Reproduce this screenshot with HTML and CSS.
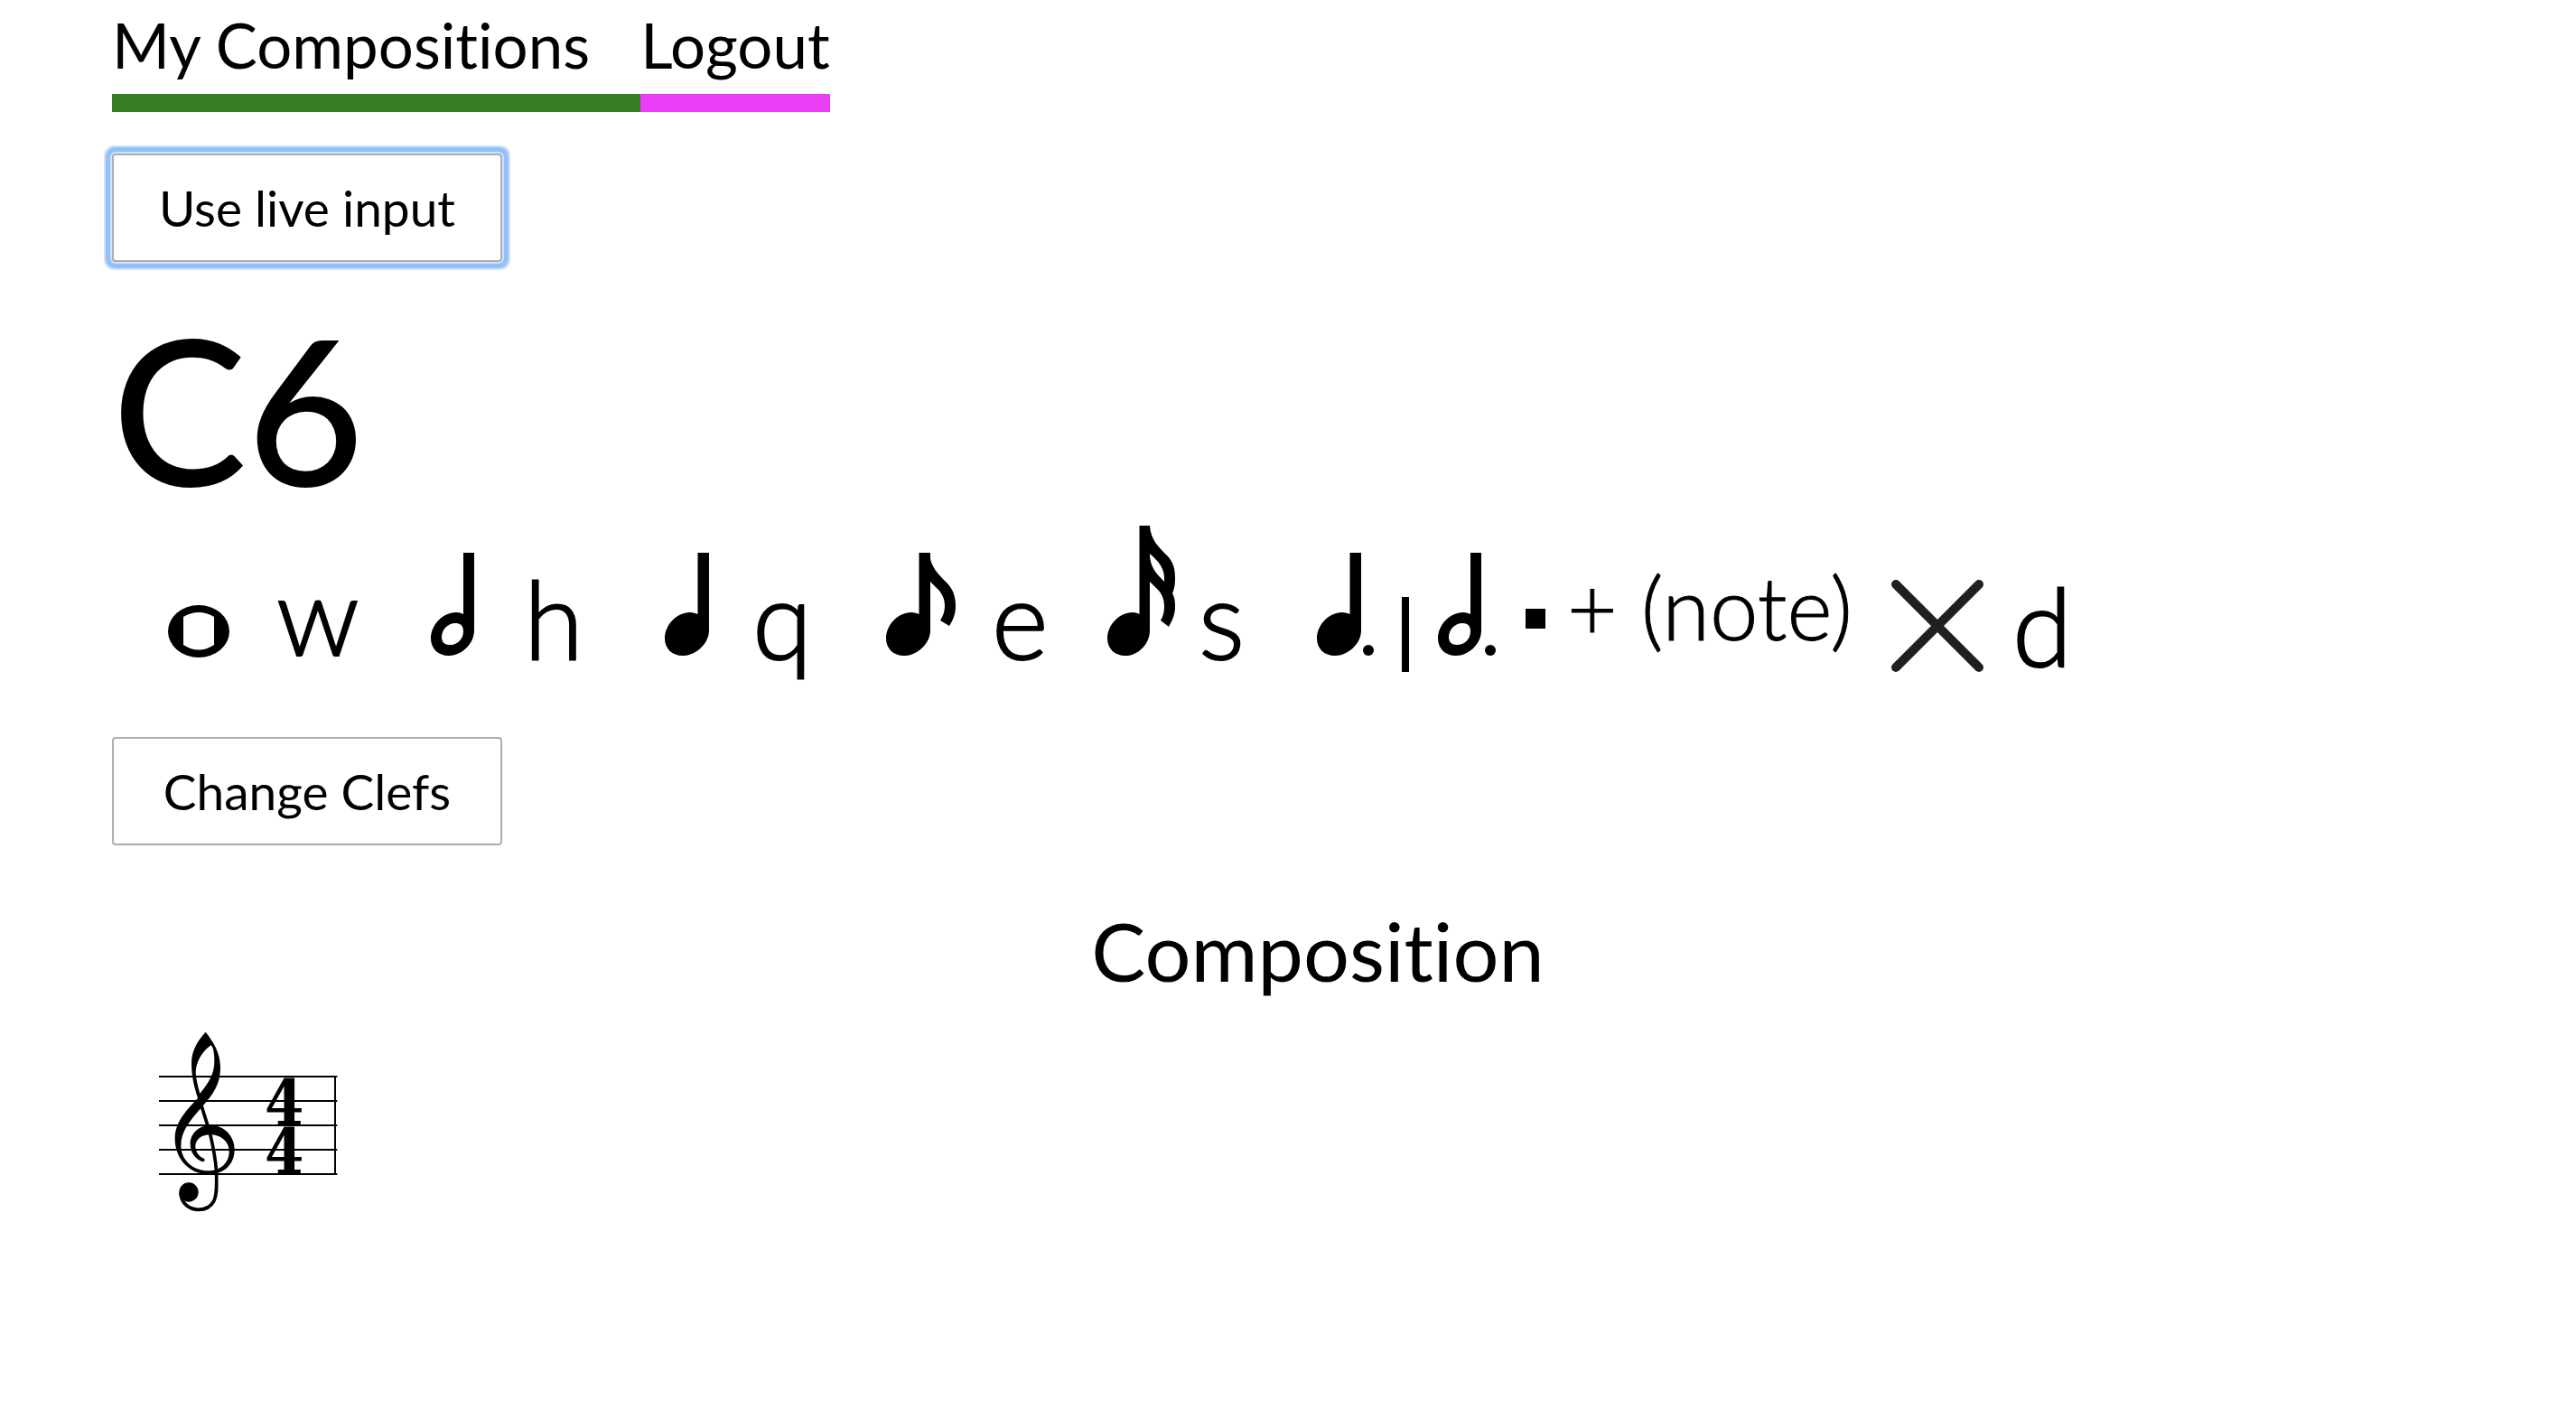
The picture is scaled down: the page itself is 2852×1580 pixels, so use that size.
FILE: index.html
```html
<!DOCTYPE html>
<html lang="en">
<head>
<meta charset="utf-8">
<meta name="viewport" content="width=device-width, initial-scale=1">
<title>Composition</title>
<link rel="stylesheet" href="styles.css">
</head>
<body>
<svg class="sprite" aria-hidden="true">
  <defs>
    <path id="quarter" d="M36.500 30H49V116C49 131 34 144 20 144C8 144 0 136 0 125C0 110 13 96 28 96C31 96 34 97 36.500 98Z"/>
    <path id="half" fill-rule="evenodd" d="M36 30H48V116C48 131 34 144 20 144C8 144 0 136 0 125C0 110 13 96 28 96C31 96 34 97 36 98ZM27 108C33 108 36 111 36 117C36 126 29 132 21 132C15 132 12 128.500 12 123.500C12 115 19 108 27 108Z"/>
  </defs>
</svg>
<nav class="nav" aria-label="Main">
  <a class="nav-link nav-compositions" href="#compositions">My Compositions</a>
  <a class="nav-link nav-logout" href="#logout">Logout</a>
</nav>
<main class="main">
  <button class="button button-active" type="button">Use live input</button>
  <p class="pitch">C6</p>
  <div class="legend">
    <svg class="icon" width="144" height="146" viewBox="162 0 144 146" role="img" aria-label="Whole note"><path fill-rule="evenodd" d="M186 117a34 29 0 1 0 68 0a34 29 0 1 0-68 0ZM203 101Q220 91 237 101V132Q220 143 203 132Z"/></svg>
    <span class="key key-w">w</span>
    <svg class="icon" width="194" height="146" viewBox="386 0 194 146" role="img" aria-label="Half note"><use href="#half" x="477"/></svg>
    <span class="key">h</span>
    <svg class="icon" width="173" height="146" viewBox="660 0 173 146" role="img" aria-label="Quarter note"><use href="#quarter" x="736"/></svg>
    <span class="key">q</span>
    <svg class="icon" width="185" height="146" viewBox="913 0 185 146" role="img" aria-label="Eighth note"><use href="#quarter" x="981"/><path transform="translate(981 0)" d="M47 30H48C49 46 58 54 67 63C75 71 77 80 77 89C77 98 74 105 70 111L60 105C63 100 65 95 65 89C65 80 61 74 57 70L47 60Z"/></svg>
    <span class="key">e</span>
    <svg class="icon" width="149" height="146" viewBox="1178 0 149 146" role="img" aria-label="Sixteenth note"><path transform="translate(1226 0)" fill-rule="evenodd" d="M35.500 0H47C48 16 57 24 66 33C74 41 75 50 75 58C75 66 74 70 72 75C75 80 75 86 75 90C75 98 72 105 68 112L59 105C62 100 63 95 63 89C63 80 59 74 56 71L47 62V116C47 131 34 144 20 144C8 144 0 136 0 125C0 110 13 96 28 96C31 96 34 97 35.500 98ZM47 31C47 45 53 52 63 62V58C63 47 57 40 47 31Z"/></svg>
    <span class="key">s</span>
    <svg class="icon" width="282" height="162" viewBox="1407 0 282 162" role="img" aria-label="Dotted quarter note or dotted half note"><use href="#quarter" x="1458"/><circle cx="1515" cy="138" r="6"/><path d="M1552 79h8v83h-8z"/><use href="#half" x="1592"/><circle cx="1650" cy="138" r="6"/></svg>
    <span class="period" role="img" aria-label="period"></span>
    <span class="phrase">+ (note)</span>
    <svg class="cross" width="102" height="102" viewBox="0 0 102 102" role="img" aria-label="Delete"><path d="M5 5L97 97M97 5L5 97"/></svg>
    <span class="key key-delete">d</span>
  </div>
  <button class="button" type="button">Change Clefs</button>
  <h1 class="title">Composition</h1>
  <svg class="staff" width="198" height="200" viewBox="48 66 594 600" role="img" aria-label="Treble clef, four four time">
    <path class="staff-lines" d="M48 216H640M48 297H640M48 378H640M48 459H640M48 540H640M633 216V540"/>
    <path fill-rule="evenodd" d="M203 68C232 105 252 140 252 187C252 240 228 275 197 310L188 320C150 362 121 400 121 445C121 492 160 529 212 529C250 529 281 505 281 465C281 433 255 409 218 409C190 409 169 425 169 448C169 466 181 482 197 488A6 6 0 0 1 193 499C168 490 152 468 152 440C152 403 182 378 220 378C265 378 299 413 299 460C299 508 263 541 213 541C150 541 101 490 101 422C101 370 135 332 177 288C165 250 156 215 156 172C156 128 178 95 203 68ZM221 112C194 130 170 165 170 205C172 230 178 250 184 272C215 235 232 205 232 165C232 140 229 120 221 112Z"/>
    <path class="clef-tail" d="M190 315C200 350 213 385 220 415C230 460 239 500 239 545C239 580 241 610 230 630C218 652 202 658 180 658C150 658 121 638 120 602"/>
    <circle cx="147" cy="600" r="32"/>
    <text class="meter" x="464" y="376">4</text>
    <text class="meter" x="464" y="538">4</text>
  </svg>
</main>
</body>
</html>
```
FILE: styles.css
```css
* { box-sizing: border-box; }

body {
  margin: 0;
  padding: 0 58px 40px 124px;
  background: #fff;
  color: #000;
  font-family: Lato, "Open Sans", sans-serif;
  font-variant-ligatures: none;
}

.sprite { position: absolute; width: 0; height: 0; }

.nav { display: flex; }

.nav-link {
  padding-bottom: 4px;
  border-bottom: 20px solid;
  color: #000;
  font-size: 69px;
  line-height: 100px;
  text-decoration: none;
  white-space: nowrap;
}

.nav-compositions { padding-right: 56px; border-color: #377d22; }
.nav-logout { border-color: #ea3ff7; }

.main {
  display: flex;
  flex-direction: column;
  align-items: flex-start;
  padding-top: 46px;
}

.button {
  min-width: 432px;
  height: 120px;
  padding: 0 44px;
  border: 2px solid #adadad;
  border-radius: 4px;
  background: #fff;
  color: #000;
  font-family: inherit;
  font-size: 55px;
}

.button-active {
  outline: none;
  box-shadow: 0 0 0 2px #cfe2fb, 0 0 0 7px #92c0fb, 0 0 0 9px #cfe2fb;
}

.pitch {
  margin: 32px 0 0;
  font-size: 224px;
  font-weight: 500;
  line-height: 260px;
}

.legend {
  display: flex;
  align-items: flex-start;
  margin-bottom: 64px;
  padding-left: 38px;
}

.icon { flex: none; }

.key {
  width: 80px;
  margin-top: 42px;
  font-size: 120px;
  font-weight: 300;
  line-height: 120px;
  -webkit-text-stroke: 2px #000;
}

.key-w { margin-top: 38px; }

.period {
  width: 22px;
  height: 22px;
  margin-top: 92px;
  background: #000;
}

.phrase {
  width: 383px;
  margin-top: 40px;
  padding-left: 24px;
  font-size: 96px;
  font-weight: 300;
  line-height: 100px;
  white-space: nowrap;
  -webkit-text-stroke: 1px #000;
}

.cross {
  flex: none;
  margin: 60px 32px 0 0;
  fill: none;
  stroke: #1f211f;
  stroke-width: 10px;
  stroke-linecap: round;
}

.key-delete { margin-top: 50px; }

.title {
  align-self: center;
  margin: 56px 0 30px;
  font-size: 90px;
  font-weight: 400;
  line-height: 120px;
}

.staff { margin-left: 52px; }

.staff-lines { fill: none; stroke: #000; stroke-width: 6px; }

.clef-tail { fill: none; stroke: #000; stroke-width: 11px; }

.meter {
  font-family: "DejaVu Serif Condensed", "DejaVu Serif", serif;
  font-size: 208px;
  font-weight: 700;
  text-anchor: middle;
}
```
